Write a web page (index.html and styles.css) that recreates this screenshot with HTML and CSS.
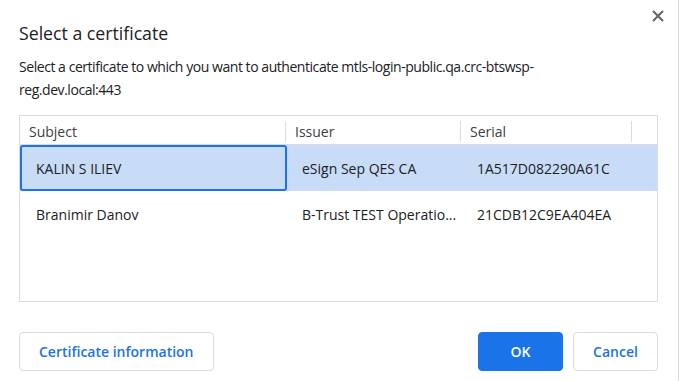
FILE: index.html
```html
<!DOCTYPE html>
<html lang="en">
<head>
    <meta charset="UTF-8">
    <title>Select a certificate</title>
    <link rel="stylesheet" href="styles.css">
</head>
<body>
    <div class="dialog">
        <div class="dialog-header">
            <h1 class="title">Select a certificate</h1>
            <button class="close-btn" aria-label="Close">
                <svg width="12" height="12" viewBox="0 0 12 12">
                    <path d="M1 1 L11 11 M11 1 L1 11" stroke="#5f6368" stroke-width="2" fill="none"/>
                </svg>
            </button>
        </div>

        <p class="description">Select a certificate to which you want to authenticate mtls-login-public.qa.crc-btswsp-reg.dev.local:443</p>

        <div class="cert-table">
            <div class="cert-head">
                <div class="head-cell">Subject</div>
                <div class="head-cell">Issuer</div>
                <div class="head-cell">Serial</div>
                <div class="head-cell"></div>
            </div>
            <div class="cert-row selected">
                <div class="cell focus">KALIN S ILIEV</div>
                <div class="cell">eSign Sep QES CA</div>
                <div class="cell">1A517D082290A61C</div>
                <div class="cell"></div>
            </div>
            <div class="cert-row">
                <div class="cell">Branimir Danov</div>
                <div class="cell">B-Trust TEST Operatio...</div>
                <div class="cell">21CDB12C9EA404EA</div>
                <div class="cell"></div>
            </div>
        </div>

        <div class="dialog-footer">
            <button class="btn">Certificate information</button>
            <div class="actions">
                <button class="btn primary">OK</button>
                <button class="btn">Cancel</button>
            </div>
        </div>
    </div>
</body>
</html>
```

FILE: styles.css
```css
* {
    margin: 0;
    padding: 0;
    box-sizing: border-box;
    font-family: 'Open Sans', sans-serif;
}

body {
    background: #ffffff;
    color: #202124;
    width: 679px;
    height: 381px;
    overflow: hidden;
}

.dialog {
    height: 381px;
    padding: 0 20px 0 19px;
    border-right: 1px solid #dcdcdc;
}

.dialog-header {
    display: flex;
    justify-content: space-between;
    align-items: flex-start;
}

.title {
    font-size: 17.7px;
    font-weight: 400;
    line-height: 24px;
    padding-top: 21px;
}

.close-btn {
    background: none;
    border: none;
    margin-top: 10px;
    margin-right: -6px;
    width: 12px;
    height: 12px;
    cursor: pointer;
}

.close-btn svg {
    display: block;
}

.description {
    font-size: 14px;
    line-height: 23px;
    letter-spacing: -0.45px;
    margin-top: 10px;
    max-width: 560px;
}

.cert-table {
    margin-top: 14px;
    height: 187px;
    border: 1px solid #dadce0;
    font-size: 14px;
}

.cert-head,
.cert-row {
    display: grid;
    grid-template-columns: 266px 175px 171px 1fr;
}

.cert-head {
    height: 29px;
    border-bottom: 1px solid #dadce0;
    color: #3c4043;
}

.head-cell {
    display: flex;
    align-items: center;
    padding-left: 9px;
    border-right: 1px solid #dadce0;
    margin: 5px 0 2px;
}

.head-cell:last-child {
    border-right: none;
}

.cert-row {
    height: 46px;
}

.cell {
    display: flex;
    align-items: center;
    padding-left: 16px;
    white-space: nowrap;
    overflow: hidden;
}

.cert-row.selected {
    background: #c8dcf8;
}

.cell.focus {
    border: 2px solid #1a73e8;
    border-radius: 3px;
    padding-left: 14px;
    width: 267px;
}

.dialog-footer {
    display: flex;
    justify-content: space-between;
    margin-top: 30px;
}

.actions {
    display: flex;
    gap: 10px;
}

.btn {
    height: 39px;
    padding: 0 19px;
    border: 1px solid #dadce0;
    border-radius: 4px;
    background: #ffffff;
    color: #1a73e8;
    font-size: 14px;
    font-weight: 600;
    cursor: pointer;
}

.actions .btn {
    width: 85px;
    padding: 0;
}

.btn.primary {
    background: #1a73e8;
    border-color: #1a73e8;
    color: #ffffff;
}
```
